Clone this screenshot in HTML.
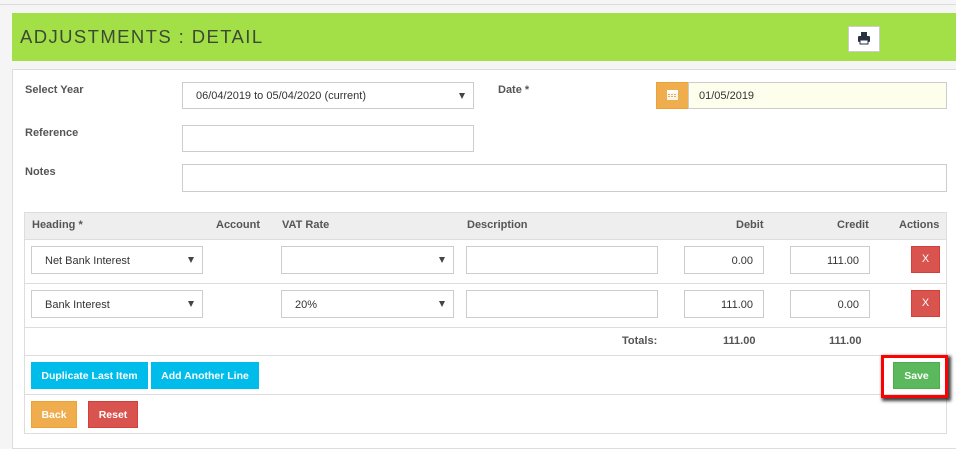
<!DOCTYPE html>
<html><head><meta charset="utf-8"><style>
*{box-sizing:border-box;margin:0;padding:0}
body{width:956px;height:440px;background:#f5f5f5;font-family:"Liberation Sans",Arial,sans-serif;font-size:11px;color:#333;position:relative;overflow:hidden}
.a{position:absolute}
.inp{position:absolute;background:#fff;border:1px solid #ccc}
.lbl{position:absolute;font-weight:bold;color:#555;font-size:11px}
.sel::after{content:"";position:absolute;right:8px;top:50%;margin-top:-3px;border-left:3.5px solid transparent;border-right:3.5px solid transparent;border-top:6px solid #444}
.txt{position:absolute;top:7px;font-size:11px;color:#333}
.num{position:absolute;right:10px;top:7px;font-size:11px}
.btn{position:absolute;color:#fff;font-weight:bold;font-size:10.5px;text-align:center;line-height:28px}
.th{position:absolute;top:219px;font-weight:bold;color:#555;font-size:11px}
.hl{position:absolute;left:24px;width:922px;height:1px;background:#ddd}
</style></head><body>
<div class="a" style="left:0;top:4px;width:956px;height:1px;background:#ddd"></div>
<div class="a" style="left:12px;top:13px;width:944px;height:48px;background:#a3e048"></div>
<div class="a" style="left:20px;top:26px;font-size:18.5px;letter-spacing:1.4px;color:#3d4a33">ADJUSTMENTS : DETAIL</div>
<div class="a" style="left:848px;top:26px;width:32px;height:26px;background:#fff;border:1px solid #ccc">
<svg width="30" height="24" viewBox="0 0 30 24" style="position:absolute;left:0;top:0"><rect x="12" y="5" width="6" height="4" fill="#2a3140"/><rect x="9" y="9" width="12" height="6" rx="1" fill="#2a3140"/><rect x="11" y="13" width="8" height="4" fill="#fff" stroke="#2a3140" stroke-width="1"/></svg></div>
<div class="a" style="left:12px;top:69px;width:950px;height:380px;background:#fff;border:1px solid #ddd"></div>

<div class="lbl" style="left:25px;top:84px">Select Year</div>
<div class="inp sel" style="left:182px;top:82px;width:292px;height:27px"><span class="txt" style="left:13px">06/04/2019 to 05/04/2020 (current)</span></div>
<div class="lbl" style="left:498px;top:84px">Date *</div>
<div class="a" style="left:656px;top:82px;width:33px;height:27px;background:#f0ad4e;border:1px solid #eea236">
<svg width="31" height="25" viewBox="0 0 31 25"><rect x="10" y="7" width="11" height="10" fill="#fff" opacity=".9"/><rect x="10" y="7" width="11" height="3" fill="#fff"/><g fill="#f0ad4e"><rect x="11" y="11" width="2" height="1"/><rect x="14" y="11" width="2" height="1"/><rect x="17" y="11" width="2" height="1"/><rect x="11" y="13" width="2" height="1"/><rect x="14" y="13" width="2" height="1"/><rect x="17" y="13" width="2" height="1"/></g></svg></div>
<div class="inp" style="left:688px;top:82px;width:259px;height:27px;background:#fefeec"><span class="txt" style="left:10px">01/05/2019</span></div>
<div class="lbl" style="left:25px;top:127px">Reference</div>
<div class="inp" style="left:182px;top:125px;width:292px;height:27px"></div>
<div class="lbl" style="left:25px;top:166px">Notes</div>
<div class="inp" style="left:182px;top:164px;width:765px;height:28px"></div>

<div class="a" style="left:24px;top:212px;width:923px;height:222px;border:1px solid #ddd;background:#fff"></div>
<div class="a" style="left:25px;top:213px;width:921px;height:26px;background:#eee"></div>
<div class="th" style="left:32px">Heading *</div>
<div class="th" style="left:216px">Account</div>
<div class="th" style="left:282px">VAT Rate</div>
<div class="th" style="left:467px">Description</div>
<div class="th" style="left:736px">Debit</div>
<div class="th" style="left:837px">Credit</div>
<div class="th" style="left:899px">Actions</div>
<div class="hl" style="top:239px"></div>
<div class="hl" style="top:283px"></div>
<div class="hl" style="top:327px"></div>
<div class="hl" style="top:355px"></div>
<div class="hl" style="top:394px"></div>

<div class="inp sel" style="left:31px;top:246px;width:172px;height:28px"><span class="txt" style="left:13px;top:8px">Net Bank Interest</span></div>
<div class="inp sel" style="left:281px;top:246px;width:173px;height:28px"></div>
<div class="inp" style="left:466px;top:246px;width:192px;height:28px"></div>
<div class="inp" style="left:684px;top:246px;width:80px;height:28px"><span class="num" style="top:8px">0.00</span></div>
<div class="inp" style="left:790px;top:246px;width:80px;height:28px"><span class="num" style="top:8px">111.00</span></div>
<div class="btn" style="left:911px;top:246px;width:29px;height:27px;background:#d9534f;border:1px solid #d43f3a;font-weight:normal;font-size:11px;line-height:24px">X</div>

<div class="inp sel" style="left:31px;top:290px;width:172px;height:28px"><span class="txt" style="left:13px;top:8px">Bank Interest</span></div>
<div class="inp sel" style="left:281px;top:290px;width:173px;height:28px"><span class="txt" style="left:13px;top:8px">20%</span></div>
<div class="inp" style="left:466px;top:290px;width:192px;height:28px"></div>
<div class="inp" style="left:684px;top:290px;width:80px;height:28px"><span class="num" style="top:8px">111.00</span></div>
<div class="inp" style="left:790px;top:290px;width:80px;height:28px"><span class="num" style="top:8px">0.00</span></div>
<div class="btn" style="left:911px;top:290px;width:29px;height:27px;background:#d9534f;border:1px solid #d43f3a;font-weight:normal;font-size:11px;line-height:24px">X</div>

<div class="a" style="left:622px;top:335px;font-weight:bold;color:#555">Totals:</div>
<div class="a" style="left:723px;top:335px;font-weight:bold;color:#555">111.00</div>
<div class="a" style="left:829px;top:335px;font-weight:bold;color:#555">111.00</div>

<div class="btn" style="left:31px;top:362px;width:117px;height:27px;background:#00bcea">Duplicate Last Item</div>
<div class="btn" style="left:151px;top:362px;width:108px;height:27px;background:#00bcea">Add Another Line</div>
<div class="a" style="left:881px;top:355px;width:67px;height:43px;border:3px solid #f00;box-shadow:2px 2px 3px 1px rgba(0,0,0,.75)"></div>
<div class="btn" style="left:893px;top:362px;width:47px;height:27px;background:#5cb85c;border:1px solid #4cae4c;line-height:26px">Save</div>

<div class="btn" style="left:31px;top:401px;width:46px;height:27px;background:#f0ad4e;border:1px solid #eea236;line-height:26px">Back</div>
<div class="btn" style="left:88px;top:401px;width:50px;height:27px;background:#d9534f;border:1px solid #d43f3a;line-height:26px">Reset</div>
</body></html>
